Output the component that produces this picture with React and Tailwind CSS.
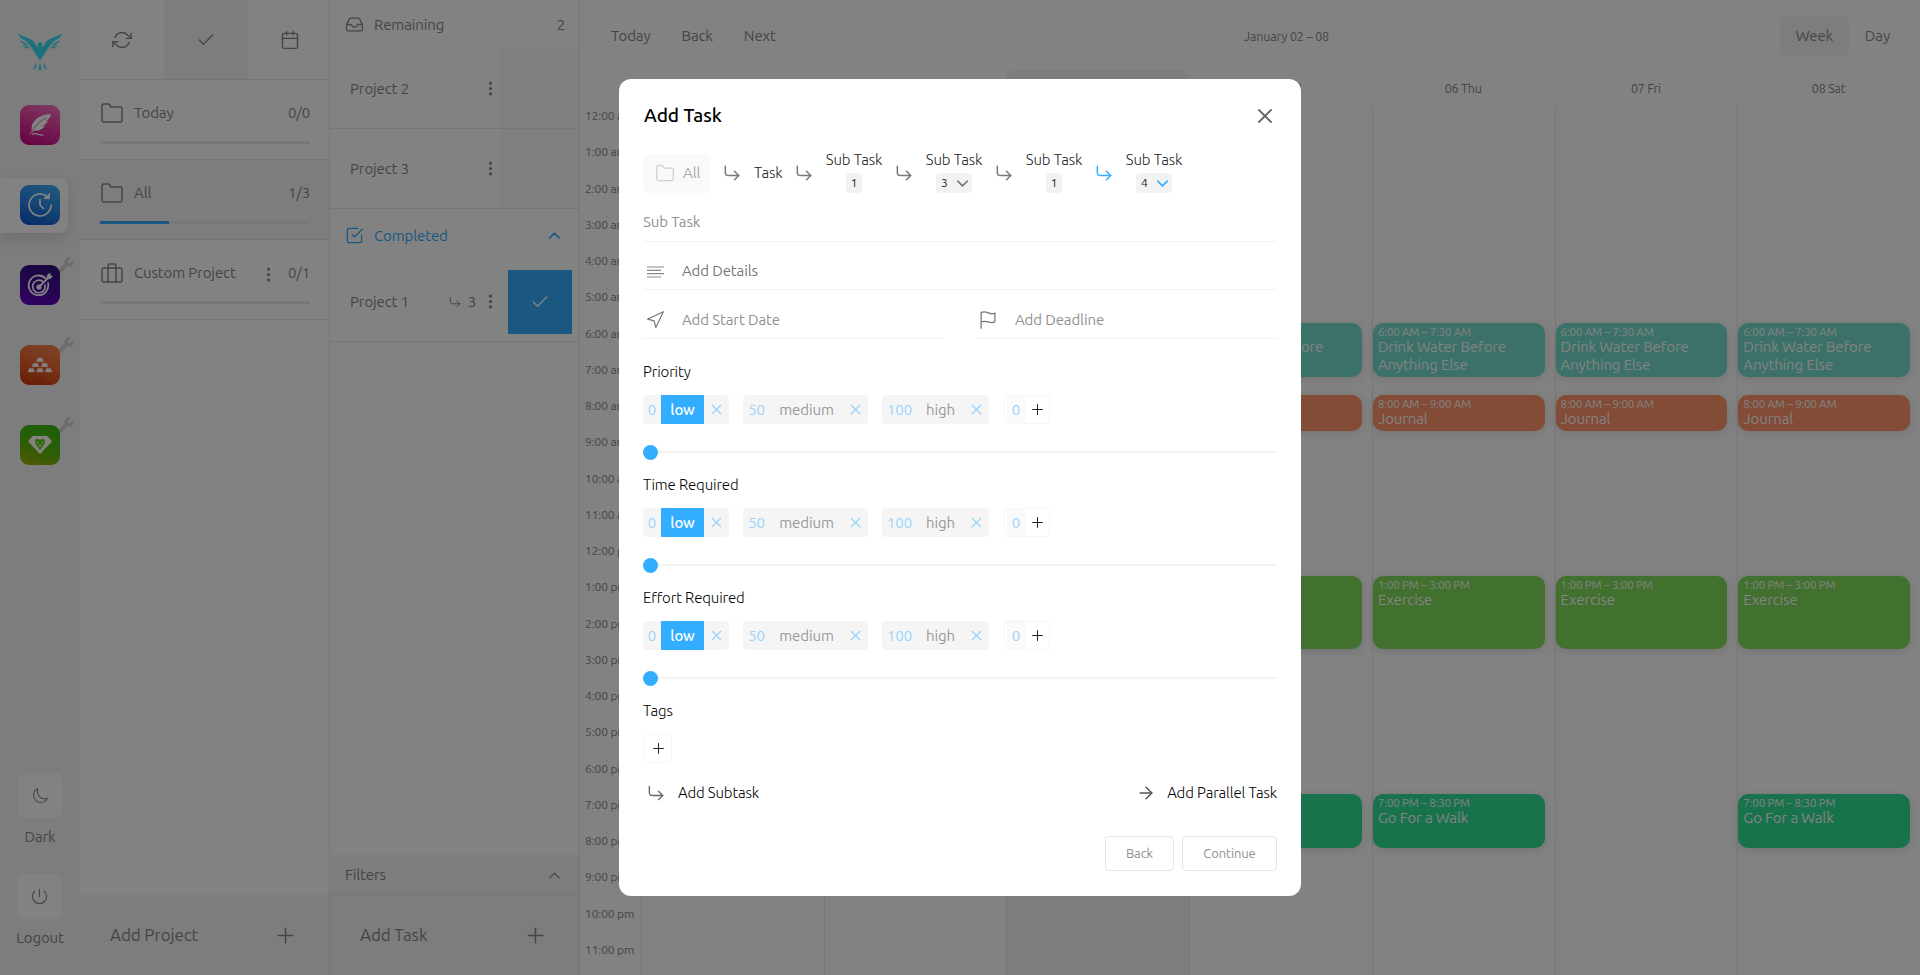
import React from "react";
import {
  FiRefreshCw, FiCheck, FiCalendar, FiFolder, FiBriefcase, FiInbox, FiCheckSquare,
  FiChevronUp, FiChevronDown, FiCornerDownRight, FiPlus, FiX, FiNavigation, FiArrowRight,
} from "react-icons/fi";
import { BsThreeDotsVertical } from "react-icons/bs";
import { IoMoonOutline, IoPowerOutline, IoFlagOutline } from "react-icons/io5";
import { FaWrench } from "react-icons/fa";

const BLUE = "#33adff";

function Bird() {
  return (
    <svg width="44" height="38" viewBox="0 0 44 38" fill="#35dff5">
      <path d="M.5.5C4 3.500 11 4 15 8C17.500 10.500 18.500 13.500 20 14.500L19.500 11.500C19.800 9.500 21.800 9 23 9.500L25 11L23.700 11.800L24 14.500C25.500 13.500 26.500 10.500 29 8C33 4 40 3.500 43.500.5C43 3.500 41.500 5.500 39 6.500C36.500 7.500 35 8.500 33 11C29.500 16 26.500 21 22 27.500C17.500 21 14.500 16 11 11C9 8.500 7.500 7.500 5 6.500C2.500 5.500 1 3.500.5.5Z" />
      <path d="M1.800 6.500C4.500 9.500 8 9.500 11 12.500C7.500 12.300 3.500 11 1.800 6.500ZM4.500 11.500C7 13 10 12.800 12.500 15.500C9 16 6 14.500 4.500 11.500ZM42.200 6.500C39.500 9.500 36 9.500 33 12.500C36.500 12.300 40.500 11 42.200 6.500ZM39.500 11.500C37 13 34 12.800 31.500 15.500C35 16 38 14.500 39.500 11.500Z" />
      <path d="M22 29L23.500 36.500Q22 38 20.500 36.500ZM18.800 28.500L18 35L15.300 36.500ZM25.200 28.500L26 35L28.700 36.500Z" />
    </svg>
  );
}

function FeatherGlyph() {
  return (
    <svg width="24" height="24" viewBox="0 0 24 24">
      <path d="M23 1C15 1 8 4.500 5 10C3 13 4 16 3.500 18L1 22.500C3 21 4.500 18.500 6.500 17.500C11 18.500 15 16 17 13L14.500 13.200C17 12 19 10 20 8L18 8.300C20.500 6.500 22.500 4 23 1Z" fill="#fff" />
      <path d="M1.500 22C6 14 11 8.500 18 5" stroke="#e85aae" strokeWidth=".9" fill="none" />
      <path d="M4 21.500C8 19 10 22.500 15.500 22" stroke="#fff" strokeWidth="1.200" fill="none" />
    </svg>
  );
}

function ClockGlyph() {
  return (
    <svg width="26" height="26" viewBox="0 0 26 26" fill="none" stroke="#fff" strokeWidth="1.700" strokeLinecap="round" strokeLinejoin="round">
      <path d="M24 13A11 11 0 1 1 20 4.500" />
      <path d="M22.500 1.500L22 6.500L17.300 6" fill="#fff" strokeWidth="1.300" />
      <path d="M13 7.500V13L16.500 16.500" />
    </svg>
  );
}

function TargetGlyph() {
  return (
    <svg width="26" height="26" viewBox="0 0 26 26" fill="none" stroke="#fff" strokeLinecap="round">
      <path d="M18.500 6.500A9.800 9.800 0 1 0 21 11" strokeWidth="1.800" />
      <path d="M15.500 9.300A6.300 6.300 0 1 0 18 13" strokeWidth="1.700" />
      <circle cx="12" cy="15" r="2.600" fill="#fff" stroke="none" />
      <path d="M12 15L21 6" strokeWidth="1.800" />
      <path d="M20 6.500L20.300 3L23 1L23.300 3.700L25.500 4L23.500 6.500Z" fill="#fff" strokeWidth=".6" />
    </svg>
  );
}

function BarsGlyph() {
  return (
    <svg width="26" height="16" viewBox="0 0 26 16" fill="#fff">
      <path d="M10.800 1H15.200L16.500 4.700H9.500ZM6.200 6.300H10.500L11.800 9.700H5ZM15.500 6.300H19.800L21 9.700H14.200ZM2.200 11.500H6.300L7.600 15H1ZM10.900 11.500H15.100L16.400 15H9.600ZM19.700 11.500H23.800L25 15H18.400Z" stroke="#fff" strokeWidth=".3" strokeLinejoin="round" />
    </svg>
  );
}

function GemGlyph() {
  return (
    <svg width="26" height="20" viewBox="0 0 26 20">
      <path d="M5.500 1H20.500L25 6.500L13 19L1 6.500Z" fill="#fff" />
      <path d="M8 5C9.500 3.500 12 3.800 13 5C14 3.800 16.500 3.500 18 5C18.700 8 16.500 9.500 15.500 12L13 15.200L10.500 12C9.500 9.500 7.300 8 8 5Z" fill="#62cf15" />
      <path d="M9.300 6.200L12 8.300L10.200 8.500ZM16.700 6.200L14 8.300L15.800 8.500ZM11.800 9.800H14.200L13 13Z" fill="#fff" />
    </svg>
  );
}

const apps = [
  { bg: "bg-[linear-gradient(200deg,#f378c0_0%,#e63fa4_45%,#c4007e_100%)]", glyph: <FeatherGlyph /> },
  { bg: "bg-[linear-gradient(200deg,#3fb0f8_0%,#2a88e8_50%,#0b52c8_100%)]", glyph: <ClockGlyph />, active: true },
  { bg: "bg-[linear-gradient(190deg,#2d1478_0%,#420b98_50%,#6a00c8_100%)]", glyph: <TargetGlyph />, wrench: true },
  { bg: "bg-[linear-gradient(200deg,#f98a50_0%,#ec6330_50%,#c83408_100%)]", glyph: <BarsGlyph />, wrench: true },
  { bg: "bg-[linear-gradient(200deg,#36b818_0%,#55b80c_55%,#a8ac08_100%)]", glyph: <GemGlyph />, wrench: true },
];

function Sidebar() {
  return (
    <aside className="flex h-full w-20 shrink-0 flex-col bg-[#f5f5f5]">
      <div className="flex h-[85px] items-end pb-[14px] pl-[18px]"><Bird /></div>
      {apps.map((a, i) => (
        <div key={i} className="flex h-20 items-center">
          <div className={"relative flex h-[55px] w-[68px] items-center rounded-r-lg pl-5 " + (a.active ? "bg-white shadow-[0_6px_16px_rgba(0,0,0,0.12)]" : "")}>
            {a.wrench && <FaWrench className="absolute -top-px left-[57px]" size={17} color="#d4d4d4" />}
            <div className={"relative flex size-10 items-center justify-center rounded-[9px] " + a.bg}>{a.glyph}</div>
          </div>
        </div>
      ))}
      <div className="mt-auto flex flex-col items-center pb-[27px]">
        <div className="flex h-[45px] w-[45px] items-center justify-center rounded-lg bg-white"><IoMoonOutline size={17} /></div>
        <span className="mt-[9px] h-5 leading-5">Dark</span>
        <div className="mr-px mt-[27px] flex h-[45px] w-[45px] items-center justify-center rounded-lg bg-white"><IoPowerOutline size={19} /></div>
        <span className="mt-[9px] h-5 leading-5">Logout</span>
      </div>
    </aside>
  );
}

function ProjectRow({ icon, name, count, fill, active, menu }) {
  return (
    <div className={"flex h-20 flex-col border-b border-[#e8e8e8] px-5 pr-[19px] " + (active ? "bg-[#f5f5f5]" : "")}>
      <div className="mt-[19px] flex h-7 items-center">
        <span className="flex w-[34px] pl-1">{icon}</span>
        <span className="flex-1">{name}</span>
        {menu && <BsThreeDotsVertical size={17} className="mr-[11px] mt-0.5" />}
        <span>{count}</span>
      </div>
      <div className="mt-[14px] h-[3px] w-full bg-[#eaeaea]">
        {fill && <div className="h-full w-[69px] bg-[#33adff]" />}
      </div>
    </div>
  );
}

function AddBar({ label }) {
  return (
    <div className="flex h-20 items-center justify-between bg-[#f5f5f5] pl-[30px] pr-[31px] text-[17px]">
      <span>{label}</span>
      <FiPlus size={25} strokeWidth={1.4} />
    </div>
  );
}

function Projects() {
  return (
    <section className="flex h-full w-[250px] shrink-0 flex-col border-r border-[#e8e8e8]">
      <div className="flex h-20 border-b border-[#e8e8e8]">
        <div className="flex w-[84px] shrink-0 items-center justify-center"><FiRefreshCw size={20} strokeWidth={1.7} /></div>
        <div className="flex w-[84px] shrink-0 items-center justify-center bg-[#f5f5f5]"><FiCheck size={20} strokeWidth={1.7} /></div>
        <div className="flex w-[84px] shrink-0 items-center justify-center"><FiCalendar size={20} strokeWidth={1.7} /></div>
      </div>
      <ProjectRow icon={<FiFolder size={24} strokeWidth={1.5} className="-ml-1" />} name="Today" count="0/0" />
      <ProjectRow icon={<FiFolder size={24} strokeWidth={1.5} className="-ml-1" />} name="All" count="1/3" fill active />
      <ProjectRow icon={<FiBriefcase size={24} strokeWidth={1.5} className="-ml-1" />} name="Custom Project" count="0/1" menu />
      <div className="flex-1" />
      <AddBar label="Add Project" />
    </section>
  );
}

function TaskRow({ name, done, subs }) {
  return (
    <div className="flex h-20 items-center border-b border-[#e8e8e8] pl-5">
      <span className="flex-1 pt-px">{name}</span>
      {subs && <><FiCornerDownRight size={14} strokeWidth={1.7} className="mr-1.5" /><span className="mr-[6px] pt-px">{subs}</span></>}
      <BsThreeDotsVertical size={17} className="mr-px" />
      {done ? (
        <div className="ml-[8px] mr-[7px] flex h-16 w-16 items-center justify-center bg-[#33adff]"><FiCheck size={20} strokeWidth={1.7} color="#fff" /></div>
      ) : (
        <div className="h-full w-[79px] bg-[#f9f9f9]" />
      )}
    </div>
  );
}

function Tasks() {
  return (
    <section className="flex h-full w-[250px] shrink-0 flex-col border-r border-[#e8e8e8]">
      <div className="flex h-[49px] items-center pl-[15px] pr-[14px]">
        <FiInbox size={19} strokeWidth={1.7} />
        <span className="ml-[10px] flex-1 pt-px">Remaining</span>
        <span className="pt-px">2</span>
      </div>
      <TaskRow name="Project 2" />
      <TaskRow name="Project 3" />
      <div className="flex h-[53px] items-center pl-[15px] pr-[15px] text-[#33adff]">
        <FiCheckSquare size={19} strokeWidth={1.7} />
        <span className="ml-[10px] flex-1 pt-px">Completed</span>
        <FiChevronUp size={19} strokeWidth={2} />
      </div>
      <TaskRow name="Project 1" subs="3" done />
      <div className="flex-1" />
      <div className="flex h-10 items-center justify-between border-b border-[#e8e8e8] bg-[#f5f5f5] pl-[15px] pr-[15px]">
        <span className="pt-px">Filters</span>
        <FiChevronUp size={19} strokeWidth={1.7} className="mt-px" />
      </div>
      <AddBar label="Add Task" />
    </section>
  );
}

const events = {
  water: { time: "6:00 AM – 7:30 AM", title: "Drink Water Before Anything Else", cls: "row-start-13 row-end-16 bg-[#74dece]" },
  journal: { time: "8:00 AM – 9:00 AM", title: "Journal", cls: "row-start-17 row-end-19 bg-[#ff956c]" },
  exercise: { time: "1:00 PM – 3:00 PM", title: "Exercise", cls: "row-start-27 row-end-31 bg-[#81dc5a]" },
  walk: { time: "7:00 PM – 8:30 PM", title: "Go For a Walk", cls: "row-start-39 row-end-42 bg-[#2fe197]" },
};
const all = ["water", "journal", "exercise", "walk"];
const days = [
  { label: "02 Sun", items: all },
  { label: "03 Mon", items: all },
  { label: "04 Tue", items: all, today: true },
  { label: "05 Wed", items: all },
  { label: "06 Thu", items: all },
  { label: "07 Fri", items: ["water", "journal", "exercise"] },
  { label: "08 Sat", items: all },
];
const hours = [];
for (let h = 0; h < 24; h++) hours.push((h % 12 || 12) + ":00 " + (h < 12 ? "am" : "pm"));

function CalendarView() {
  return (
    <main className="flex h-full min-w-0 flex-1 flex-col">
      <div className="grid h-[70px] grid-cols-3 items-center pl-[31px] pr-[30px] pt-[2px]">
        <div className="flex gap-[31px]"><span>Today</span><span>Back</span><span>Next</span></div>
        <div className="pl-[72px] text-center text-[12.5px] tracking-[-0.15px]">January 02 – 08</div>
        <div className="flex items-center justify-end gap-[16px]">
          <span className="flex h-10 w-[69px] items-center justify-center rounded-md bg-[#f5f5f5]">Week</span><span>Day</span>
        </div>
      </div>
      <div className="flex flex-1">
        <div className="w-[61px] shrink-0 pt-[35px] text-[12px]">
          {hours.map((h) => (
            <div key={h} className="h-[36.25px] whitespace-nowrap pl-[5px] leading-[22px]">{h}</div>
          ))}
        </div>
        {days.map((d) => (
          <div key={d.label} className={"flex min-w-0 flex-1 flex-col " + (d.today ? "rounded-t-lg bg-[#f5f5f5]" : "")}>
            <div className="h-[35px] text-center text-[12.5px] leading-[37px] tracking-[-0.2px]">{d.label}</div>
            <div className="grid h-[870px] grid-rows-[repeat(48,18.125px)] border-l border-[#e8e8e8] pr-[10px]">
              {d.items.map((k) => (
                <div key={k} className={"rounded-[10px] pl-[5px] pt-[2px] text-white shadow-[0_2px_10px_rgba(0,0,0,0.12)] " + events[k].cls}>
                  <div className="h-[13px] text-[11.5px] leading-[14px] tracking-[-0.15px]">{events[k].time}</div>
                  <div className="pr-6 leading-[18px]">{events[k].title}</div>
                </div>
              ))}
            </div>
          </div>
        ))}
      </div>
    </main>
  );
}

function Crumb({ n, open, active }) {
  const color = active ? BLUE : "#777";
  return (
    <>
      <span className="ml-[14px] flex w-[15px] justify-center"><FiCornerDownRight size={20} strokeWidth={1.8} color={color} className="shrink-0" /></span>
      <div className="ml-[15px] flex w-[56px] flex-col items-center">
        <span className="h-5 whitespace-nowrap leading-[14px]">Sub Task</span>
        <span className={"flex h-5 items-center rounded bg-[#f2f2f2] text-[12px] font-normal " + (open ? "w-9 pl-[5px]" : "w-4 justify-center")}>
          {n}
          {open && <FiChevronDown size={19} strokeWidth={2} color={color} className="ml-[5px] shrink-0" />}
        </span>
      </div>
    </>
  );
}

function Preset({ value, name, w, valueW, nameW, selected }) {
  return (
    <div className={"flex h-[29px] items-stretch overflow-hidden rounded-[4px] bg-[#f5f5f5] " + w}>
      <span className={"flex items-center justify-center pt-px text-[#99d4fc] " + valueW}>{value}</span>
      <span className={"flex items-center justify-center pt-px " + nameW + (selected ? " bg-[#33adff] font-medium text-white" : " text-[#999]")}>{name}</span>
      <span className="flex flex-1 items-center justify-center"><FiX size={17} strokeWidth={1.5} color="#8fd0fc" /></span>
    </div>
  );
}

function Slider({ label }) {
  return (
    <div className="mb-[15px]">
      <div className="h-5 leading-5 text-black">{label}</div>
      <div className="mt-[13px] flex font-normal">
        <Preset value="0" name="low" w="w-[86px]" valueW="w-[18px]" nameW="w-[43px]" selected />
        <div className="w-[14px]" />
        <Preset value="50" name="medium" w="w-[125px]" valueW="w-[27px]" nameW="w-[73px]" />
        <div className="w-[14px]" />
        <Preset value="100" name="high" w="w-[107px]" valueW="w-[35px]" nameW="w-[47px]" />
        <div className="ml-[15px] flex h-[29px] w-[46px] items-stretch rounded-[4px] border border-[#f6f6f6] pl-[2px]">
          <span className="flex w-[18px] items-center justify-center bg-[#fafafa] pt-px text-[#99d4fc]">0</span>
          <span className="flex flex-1 items-center justify-center"><FiPlus size={17} strokeWidth={1.3} color="#111" /></span>
        </div>
      </div>
      <div className="mt-[21px] flex h-[15px] items-center">
        <span className="size-[15px] rounded-full bg-[#33adff]" />
        <span className="-mt-px h-[2px] flex-1 bg-[#f3f3f3]" />
      </div>
    </div>
  );
}

function Modal() {
  return (
    <div className="absolute inset-0 flex items-center justify-center bg-black/49">
      <div className="flex h-[817px] w-[682px] flex-col rounded-xl bg-white px-6 pt-6 font-light text-[#222]">
        <div className="flex h-6 items-center justify-between">
          <h1 className="pl-px text-[19px] font-medium leading-6 tracking-[-0.05px] text-black">Add Task</h1>
          <FiX size={24} strokeWidth={1.8} color="#666" className="mt-0.5" />
        </div>
        <div className="mt-[26px] flex h-10 items-center">
          <span className="flex h-[39px] w-[67px] items-center gap-[8px] rounded-md bg-[#f9f9f9] pl-[12px] font-normal text-[#aaa]">
            <FiFolder size={20} strokeWidth={1.5} color="#d0d0d0" />All
          </span>
          <span className="ml-[14px] flex w-[15px] justify-center"><FiCornerDownRight size={20} strokeWidth={1.8} color="#777" className="shrink-0" /></span>
          <span className="ml-[15px] w-[28px] whitespace-nowrap">Task</span>
          <Crumb n="1" /><Crumb n="3" open /><Crumb n="1" /><Crumb n="4" open active />
        </div>
        <div className="mt-[10px] flex h-[39px] items-center border-b border-[#f1f1f1] pt-px font-normal text-[#909090]">Sub Task</div>
        <div className="flex h-12 items-center border-b border-[#f1f1f1] pt-[12px] font-normal text-[#777]">
          <svg width="18" height="12" viewBox="0 0 18 12" className="ml-1 mr-[17px]" stroke="#8a8a8a" strokeWidth="1.200"><path d="M0 1H17M0 4.300H14M0 7.600H17M0 11H14" /></svg>
          Add Details
        </div>
        <div className="flex gap-8 font-normal text-[#909090]">
          <div className="flex h-[49px] flex-1 items-center border-b border-[#f1f1f1] pt-3">
            <FiNavigation size={20} strokeWidth={1.4} color="#777" className="ml-[2px] mr-[17px]" />Add Start Date
          </div>
          <div className="flex h-[49px] flex-1 items-center border-b border-[#f1f1f1] pt-3">
            <IoFlagOutline size={20} color="#777" className="ml-[2px] mr-[17px]" />Add Deadline
          </div>
        </div>
        <div className="mt-[23px]">
          <Slider label="Priority" />
          <Slider label="Time Required" />
          <Slider label="Effort Required" />
        </div>
        <div className="h-5 leading-5 text-black">Tags</div>
        <div className="mt-[13px] flex h-[29px] w-[29px] items-center justify-center rounded-[4px] border border-[#f6f6f6] pl-px"><FiPlus size={17} strokeWidth={1.3} color="#111" /></div>
        <div className="mt-5 flex h-5 items-center justify-between text-black">
          <span className="flex items-center gap-[12px] pl-[3px]"><FiCornerDownRight size={20} strokeWidth={1.6} color="#666" />Add Subtask</span>
          <span className="flex items-center gap-[11px]"><FiArrowRight size={20} strokeWidth={1.7} color="#555" />Add Parallel Task</span>
        </div>
        <div className="mt-[33px] flex justify-end gap-2 text-[13px] font-normal text-[#909090]">
          <button className="h-[35px] w-[69px] rounded-[4px] border border-[#e5e5e5] pt-px">Back</button>
          <button className="h-[35px] w-[95px] rounded-[4px] border border-[#e5e5e5] pt-px">Continue</button>
        </div>
      </div>
    </div>
  );
}

export default function App() {
  return (
    <div className="relative flex h-[975px] w-[1920px] overflow-hidden bg-white font-['Ubuntu','Open_Sans',sans-serif] text-[15px] tracking-[-0.12px] text-[#888]">
      <Sidebar />
      <Projects />
      <Tasks />
      <CalendarView />
      <Modal />
    </div>
  );
}
